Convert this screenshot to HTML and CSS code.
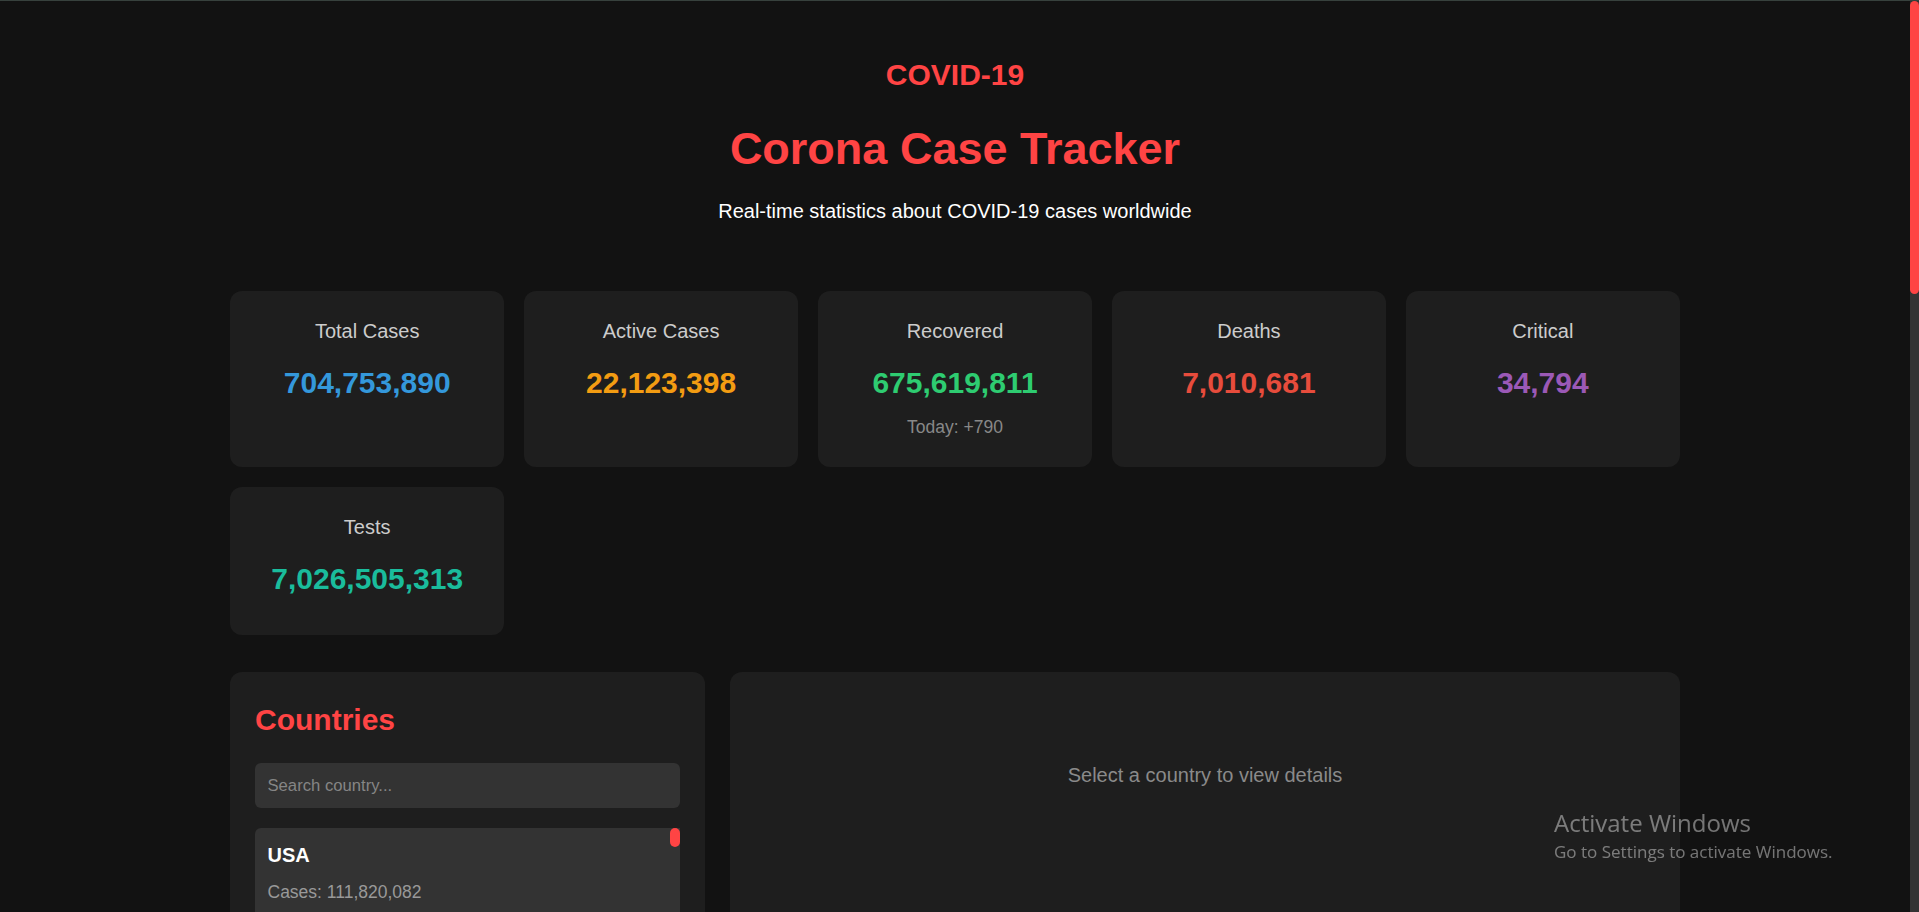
FILE: index.html
```html
<!DOCTYPE html>
<html lang="en">
<head>
<meta charset="utf-8">
<title>Corona Case Tracker</title>
<link rel="stylesheet" href="styles.css">
</head>
<body>
<div class="app">
  <header class="header">
    <div class="logo">COVID-19</div>
    <h1 class="title">Corona Case Tracker</h1>
    <p class="subtitle">Real-time statistics about COVID-19 cases worldwide</p>
  </header>

  <section class="stats">
    <div class="stat-card">
      <h3 class="stat-label">Total Cases</h3>
      <p class="stat-value blue">704,753,890</p>
    </div>
    <div class="stat-card">
      <h3 class="stat-label">Active Cases</h3>
      <p class="stat-value orange">22,123,398</p>
    </div>
    <div class="stat-card">
      <h3 class="stat-label">Recovered</h3>
      <p class="stat-value green">675,619,811</p>
      <p class="stat-today">Today: +790</p>
    </div>
    <div class="stat-card">
      <h3 class="stat-label">Deaths</h3>
      <p class="stat-value red">7,010,681</p>
    </div>
    <div class="stat-card">
      <h3 class="stat-label">Critical</h3>
      <p class="stat-value purple">34,794</p>
    </div>
    <div class="stat-card">
      <h3 class="stat-label">Tests</h3>
      <p class="stat-value teal">7,026,505,313</p>
    </div>
  </section>

  <section class="main-grid">
    <div class="panel countries">
      <h2 class="panel-title">Countries</h2>
      <input class="search" type="text" placeholder="Search country...">
      <div class="list-wrap">
        <ul class="country-list">
          <li class="country-item"><h3 class="country-name">USA</h3><p class="country-cases">Cases: 111,820,082</p></li>
          <li class="country-item"><h3 class="country-name">India</h3><p class="country-cases">Cases: 45,035,393</p></li>
          <li class="country-item"><h3 class="country-name">France</h3><p class="country-cases">Cases: 40,138,560</p></li>
          <li class="country-item"><h3 class="country-name">Germany</h3><p class="country-cases">Cases: 38,828,995</p></li>
          <li class="country-item"><h3 class="country-name">Brazil</h3><p class="country-cases">Cases: 38,743,918</p></li>
          <li class="country-item"><h3 class="country-name">S. Korea</h3><p class="country-cases">Cases: 34,571,873</p></li>
          <li class="country-item"><h3 class="country-name">Japan</h3><p class="country-cases">Cases: 33,803,572</p></li>
          <li class="country-item"><h3 class="country-name">Italy</h3><p class="country-cases">Cases: 26,723,249</p></li>
          <li class="country-item"><h3 class="country-name">UK</h3><p class="country-cases">Cases: 24,910,387</p></li>
          <li class="country-item"><h3 class="country-name">Russia</h3><p class="country-cases">Cases: 24,124,215</p></li>
          <li class="country-item"><h3 class="country-name">Turkey</h3><p class="country-cases">Cases: 17,004,677</p></li>
          <li class="country-item"><h3 class="country-name">Spain</h3><p class="country-cases">Cases: 13,980,340</p></li>
          <li class="country-item"><h3 class="country-name">Australia</h3><p class="country-cases">Cases: 11,861,161</p></li>
          <li class="country-item"><h3 class="country-name">Vietnam</h3><p class="country-cases">Cases: 11,624,000</p></li>
          <li class="country-item"><h3 class="country-name">Argentina</h3><p class="country-cases">Cases: 10,094,643</p></li>
          <li class="country-item"><h3 class="country-name">Taiwan</h3><p class="country-cases">Cases: 9,970,937</p></li>
          <li class="country-item"><h3 class="country-name">Netherlands</h3><p class="country-cases">Cases: 8,712,835</p></li>
          <li class="country-item"><h3 class="country-name">Mexico</h3><p class="country-cases">Cases: 7,702,809</p></li>
          <li class="country-item"><h3 class="country-name">Iran</h3><p class="country-cases">Cases: 7,627,186</p></li>
          <li class="country-item"><h3 class="country-name">Indonesia</h3><p class="country-cases">Cases: 6,829,221</p></li>
        </ul>
        <div class="list-scroll"><div class="list-thumb"></div></div>
      </div>
    </div>
    <div class="panel details">
      <p class="details-empty">Select a country to view details</p>
    </div>
  </section>
</div>

<div class="page-scroll"><div class="page-thumb"></div></div>

<div class="win-watermark">
  <div class="win-title">Activate Windows</div>
  <div class="win-sub">Go to Settings to activate Windows.</div>
</div>
</body>
</html>
```
FILE: styles.css
```css
html {
  border-top: 1px solid #37413d;
  background: #121212;
  scrollbar-width: none;
}

::-webkit-scrollbar {
  width: 0;
  height: 0;
}

* {
  box-sizing: border-box;
}

body {
  margin: 0;
  padding-right: 9px;
  background: #121212;
  color: #ffffff;
  font-family: "Liberation Sans", Arial, sans-serif;
}

.app {
  max-width: 1500px;
  margin: 0 auto;
  padding: 25px;
}

/* Header */
.header {
  text-align: center;
  padding: 31.5px 0 37.5px;
  margin-bottom: 31px;
}

.logo {
  color: #ff4444;
  font-size: 30px;
  font-weight: 700;
  line-height: 34.5px;
  margin-bottom: 31px;
}

.title {
  margin: 0 0 25px;
  color: #ff4444;
  font-size: 45px;
  font-weight: 700;
  line-height: 51.75px;
}

.subtitle {
  margin: 0;
  color: #ffffff;
  font-size: 20px;
  line-height: 23px;
}

/* Stats */
.stats {
  display: grid;
  grid-template-columns: repeat(auto-fill, minmax(250px, 1fr));
  gap: 19.5px;
  margin-bottom: 36.5px;
}

.stat-card {
  background: #1e1e1e;
  border-radius: 12px;
  padding: 29px 25px 30px;
  text-align: center;
}

.stat-label {
  margin: 0 0 23px;
  color: #cccccc;
  font-size: 20px;
  font-weight: 400;
  line-height: 23px;
}

.stat-value {
  margin: 0 0 9px;
  font-size: 30px;
  font-weight: 700;
  line-height: 34.5px;
}

.stat-today {
  margin: 17px 0 0;
  color: #888888;
  font-size: 17.5px;
  line-height: 19.5px;
}

.blue { color: #3498db; }
.orange { color: #f39c12; }
.green { color: #2ecc71; }
.red { color: #e74c3c; }
.purple { color: #9b59b6; }
.teal { color: #1abc9c; }

/* Main grid */
.main-grid {
  display: grid;
  grid-template-columns: 1fr 2fr;
  gap: 25px;
}

.panel {
  background: #1e1e1e;
  border-radius: 12px;
  padding: 25px;
}

.panel-title {
  margin: 6px 0 26px;
  color: #ff4444;
  font-size: 30px;
  font-weight: 700;
  line-height: 34.5px;
}

.search {
  display: block;
  width: 100%;
  height: 45px;
  padding: 0 12.5px;
  margin-bottom: 19.5px;
  border: none;
  border-radius: 6px;
  background: #333333;
  color: #ffffff;
  font-family: "Liberation Sans", Arial, sans-serif;
  font-size: 16.67px;
  outline: none;
}

.search::placeholder {
  color: #858585;
}

.list-wrap {
  position: relative;
}

.country-list {
  list-style: none;
  margin: 0;
  padding: 0;
  max-height: 625px;
  overflow-y: auto;
  scrollbar-width: none;
}

.list-scroll {
  position: absolute;
  top: 0;
  right: 0;
  bottom: 0;
  width: 10px;
  background: #333333;
}

.list-thumb {
  height: 19px;
  border-radius: 5px;
  background: #ff4444;
}

.country-item {
  background: #333333;
  border-radius: 6px;
  padding: 16px 12.5px;
  margin-bottom: 12.5px;
}

.country-name {
  margin: 0 0 15.5px;
  color: #ffffff;
  font-size: 20px;
  font-weight: 700;
  line-height: 23px;
}

.country-cases {
  margin: 0;
  color: #999999;
  font-size: 17.5px;
  line-height: 20px;
}

.details-empty {
  margin: 0;
  padding-top: 67.5px;
  text-align: center;
  color: #8a8a8a;
  font-size: 20px;
  line-height: 23px;
}

/* Page scrollbar (drawn, as in the screenshot) */
.page-scroll {
  position: fixed;
  top: 1px;
  right: 0;
  bottom: 0;
  width: 9px;
  background: #333333;
}

.page-thumb {
  height: 293px;
  border-radius: 5px;
  background: #ff4444;
}

/* OS watermark overlay */
.win-watermark {
  position: fixed;
  left: 1554px;
  top: 808px;
  color: rgba(255, 255, 255, 0.42);
  font-family: "Open Sans", "Noto Sans", sans-serif;
  pointer-events: none;
}

.win-title {
  font-size: 24px;
  line-height: 30px;
}

.win-sub {
  margin-top: 3px;
  font-size: 17px;
  line-height: 22px;
}
```
